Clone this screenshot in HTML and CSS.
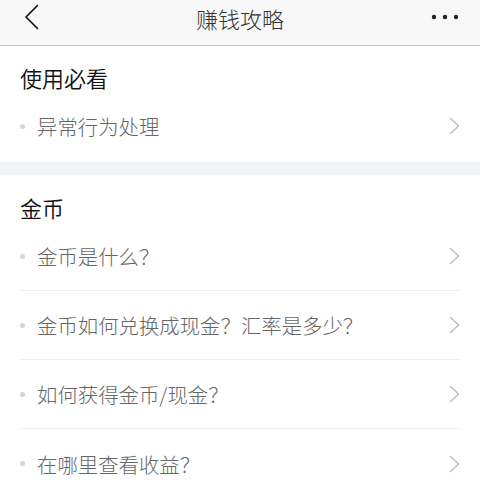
FILE: index.html
```html
<!DOCTYPE html>
<html lang="zh-CN">
<head>
<meta charset="utf-8">
<title>赚钱攻略</title>
<link rel="stylesheet" href="styles.css">
</head>
<body>
<header class="topbar">
  <div class="back">
    <svg width="16" height="26" viewBox="0 0 16 26"><polyline points="13.5,1.5 2,13 13.5,24.5" fill="none" stroke="#111" stroke-width="1.7" stroke-linecap="round" stroke-linejoin="round"/></svg>
  </div>
  <div class="title">赚钱攻略</div>
  <div class="more">
    <svg width="28" height="6" viewBox="0 0 28 6"><circle cx="3" cy="3" r="2.2" fill="#222"/><circle cx="14" cy="3" r="2.2" fill="#222"/><circle cx="25" cy="3" r="2.2" fill="#222"/></svg>
  </div>
</header>

<section class="section first">
  <h2 class="section-title">使用必看</h2>
  <ul class="list">
    <li class="item"><span class="dot"></span><span class="text">异常行为处理</span><svg class="arrow" width="11" height="18" viewBox="0 0 11 18"><polyline points="1.5,1.5 9.5,9 1.5,16.5" fill="none" stroke="#bdbdbd" stroke-width="1.5" stroke-linecap="round" stroke-linejoin="round"/></svg></li>
  </ul>
</section>

<div class="band"></div>

<section class="section">
  <h2 class="section-title">金币</h2>
  <ul class="list">
    <li class="item"><span class="dot"></span><span class="text">金币是什么？</span><svg class="arrow" width="11" height="18" viewBox="0 0 11 18"><polyline points="1.5,1.5 9.5,9 1.5,16.5" fill="none" stroke="#bdbdbd" stroke-width="1.5" stroke-linecap="round" stroke-linejoin="round"/></svg></li>
    <li class="item"><span class="dot"></span><span class="text">金币如何兑换成现金？汇率是多少？</span><svg class="arrow" width="11" height="18" viewBox="0 0 11 18"><polyline points="1.5,1.5 9.5,9 1.5,16.5" fill="none" stroke="#bdbdbd" stroke-width="1.5" stroke-linecap="round" stroke-linejoin="round"/></svg></li>
    <li class="item"><span class="dot"></span><span class="text">如何获得金币/现金？</span><svg class="arrow" width="11" height="18" viewBox="0 0 11 18"><polyline points="1.5,1.5 9.5,9 1.5,16.5" fill="none" stroke="#bdbdbd" stroke-width="1.5" stroke-linecap="round" stroke-linejoin="round"/></svg></li>
    <li class="item"><span class="dot"></span><span class="text">在哪里查看收益？</span><svg class="arrow" width="11" height="18" viewBox="0 0 11 18"><polyline points="1.5,1.5 9.5,9 1.5,16.5" fill="none" stroke="#bdbdbd" stroke-width="1.5" stroke-linecap="round" stroke-linejoin="round"/></svg></li>
  </ul>
</section>
</body>
</html>
```

FILE: styles.css
```css
* { box-sizing: border-box; }
html, body { margin: 0; padding: 0; background: #fff; }
body {
  font-family: "Noto Sans CJK SC", "Noto Sans", sans-serif;
  width: 480px;
  overflow: hidden;
}
.topbar {
  height: 46px;
  background: #f8f8f8;
  border-bottom: 1px solid #c9c9c9;
  display: grid;
  grid-template-columns: 1fr auto 1fr;
  align-items: center;
  padding: 0 0 11px 0;
}
.back { padding-left: 24px; display: flex; align-items: center; }
.back svg { display: block; }
.title {
  font-size: 22px;
  font-weight: 300;
  line-height: 26px;
  color: #333;
  padding-top: 1px;
}
.more { display: flex; justify-content: flex-end; padding-right: 21px; }
.more svg { display: block; }

.section-title {
  margin: 0;
  font-size: 22px;
  font-weight: 350;
  line-height: 26px;
  color: #111;
  padding: 19px 20px 2px;
}
.first .section-title { padding-top: 18px; padding-bottom: 2px; }
.list { list-style: none; margin: 0; padding: 0 20px; }
.item {
  height: 69px;
  display: flex;
  align-items: center;
  border-bottom: 1px solid #efefef;
}
.first .item { height: 70px; padding-bottom: 2px; }
.item:last-child { border-bottom: none; }
.dot {
  width: 5px;
  height: 5px;
  border-radius: 50%;
  background: #d6d6d6;
  margin-right: 12px;
  flex: none;
}
.text {
  flex: 1;
  font-size: 20.4px;
  font-weight: 300;
  line-height: 24px;
  color: #666;
}
.arrow {
  display: block;
  flex: none;
}
.band { height: 13px; background: #f3f4f6; }
```
